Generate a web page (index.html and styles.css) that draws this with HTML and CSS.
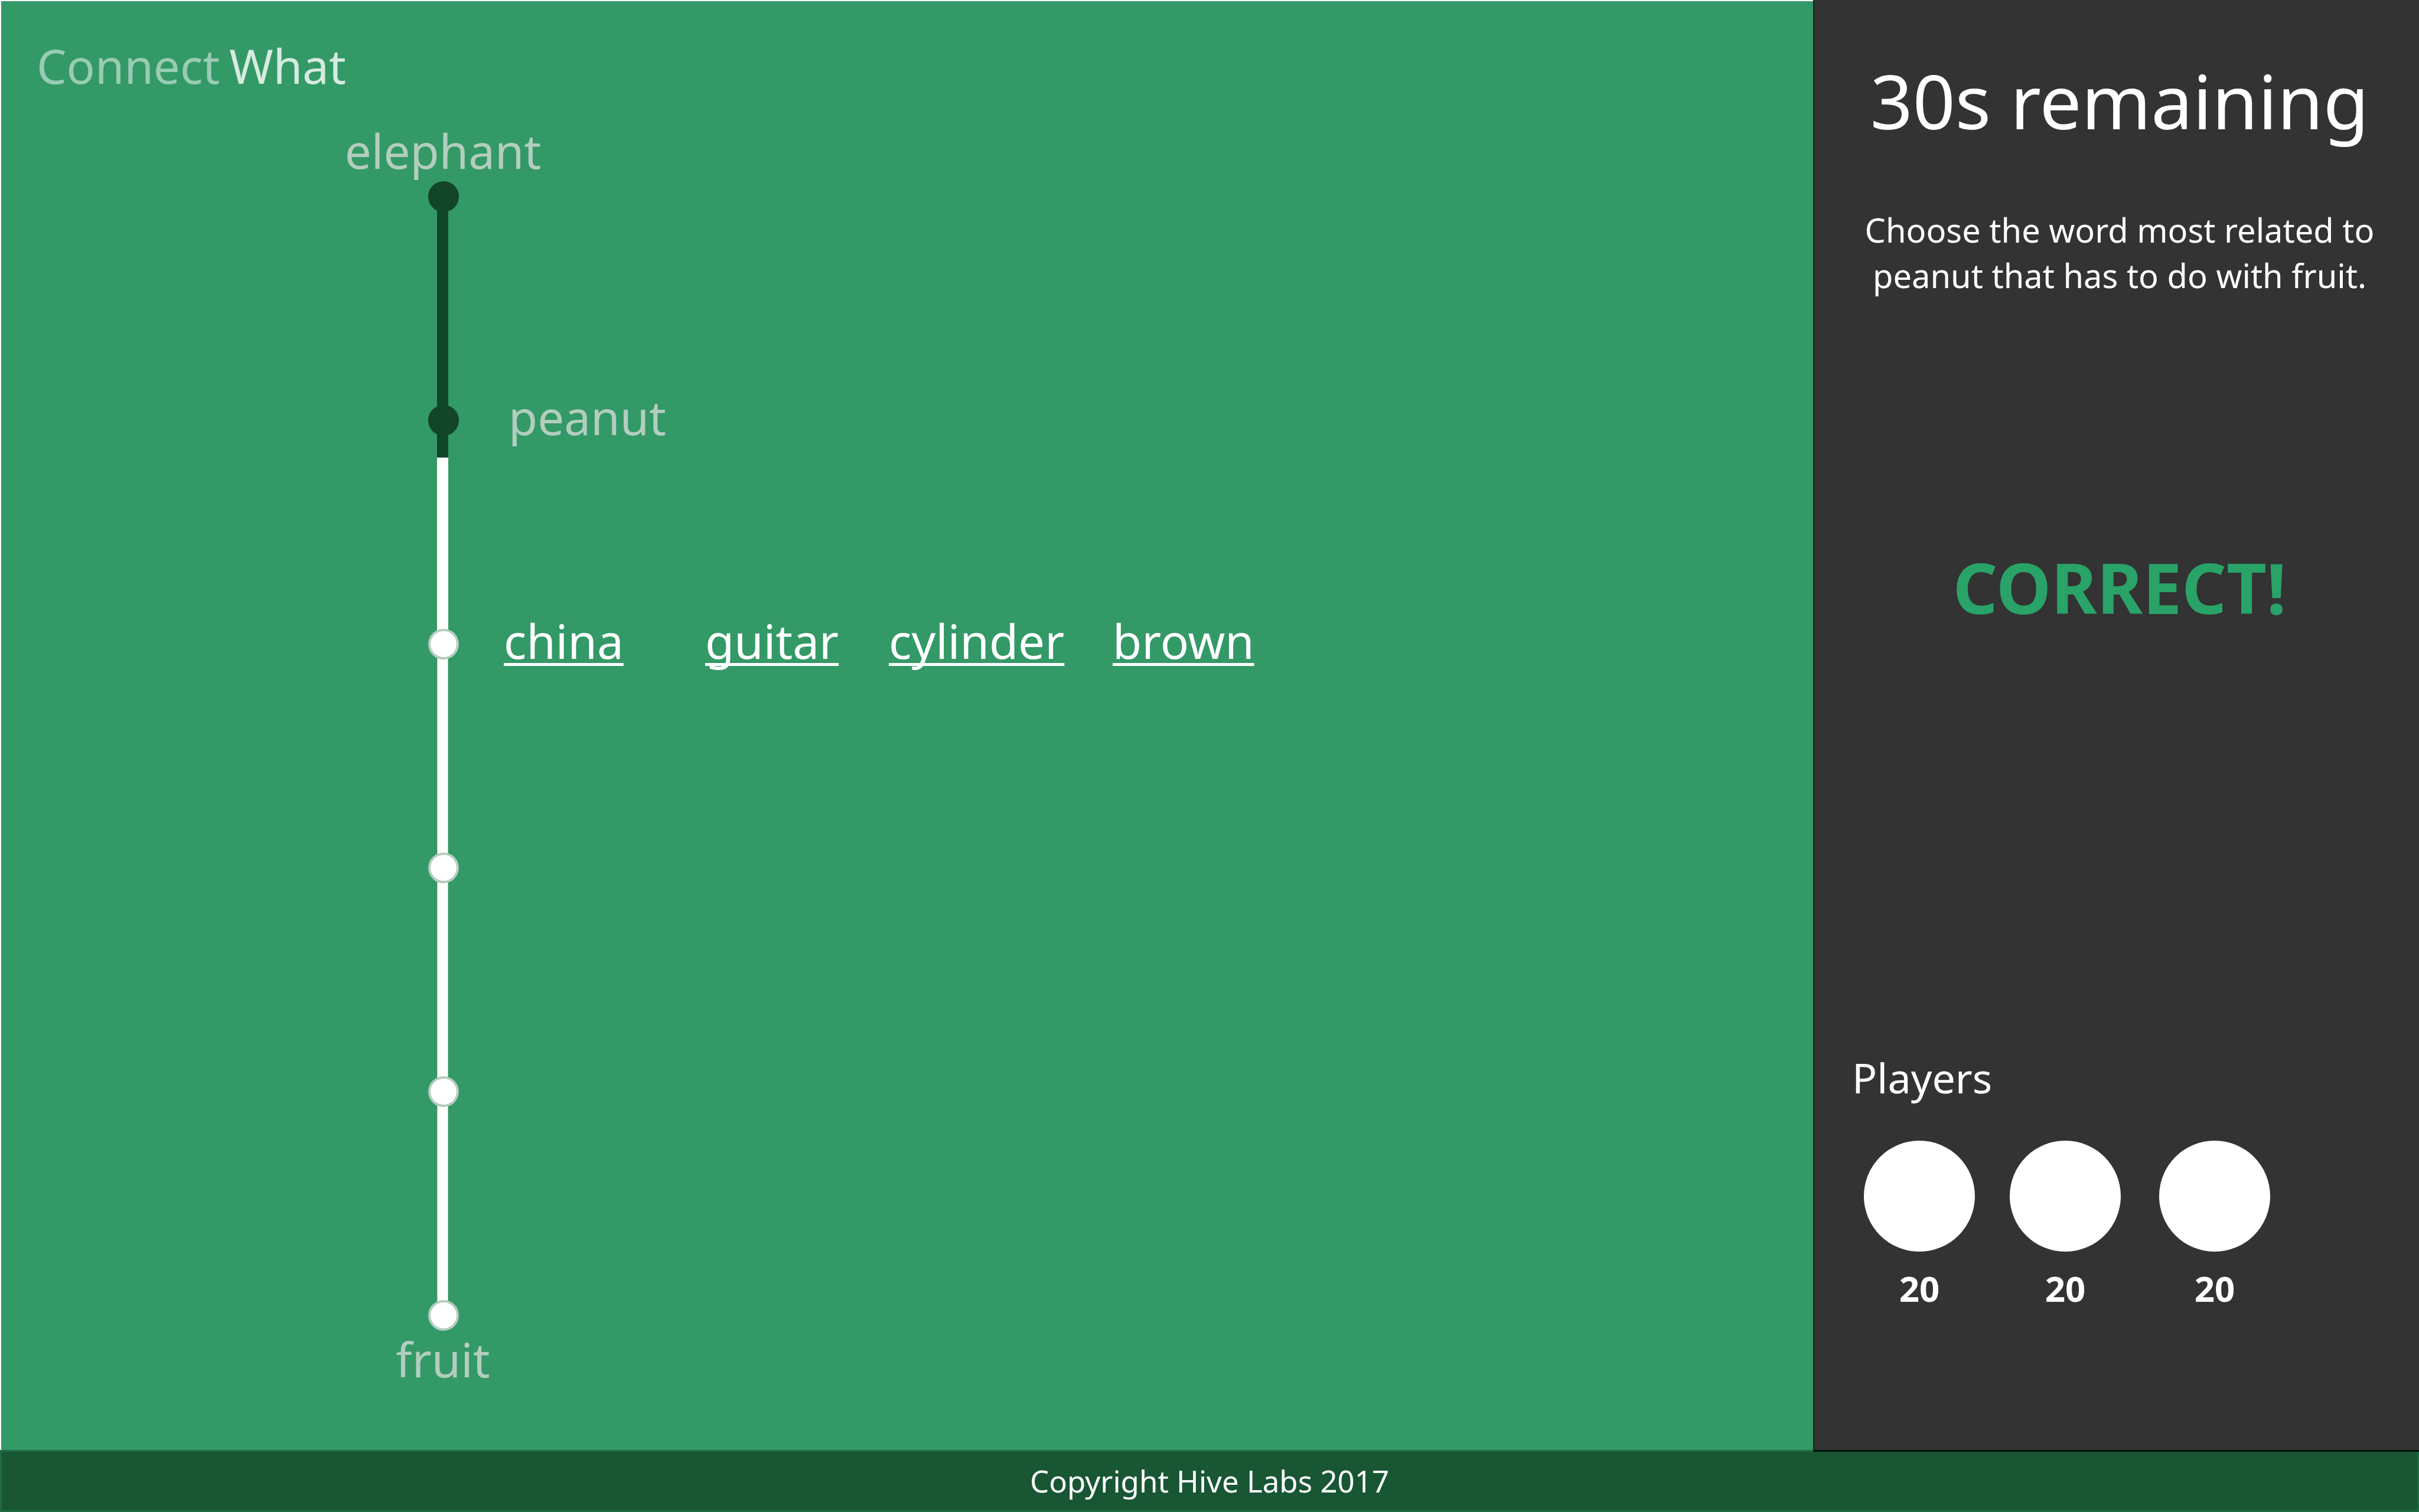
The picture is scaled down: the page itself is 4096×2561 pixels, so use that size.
FILE: index.html
```html
<!DOCTYPE html>
<html lang="en">
<head>
<meta charset="utf-8">
<meta name="viewport" content="width=device-width, initial-scale=1">
<title>ConnectWhat</title>
<link rel="stylesheet" href="styles.css">
</head>
<body>
<div class="page">
  <main class="board">
    <h1 class="logo"><span class="logo-first">Connect</span><span class="logo-second">What</span></h1>
    <section class="chain" aria-label="Word chain">
      <p class="chain-end chain-start">elephant</p>
      <ol class="steps">
        <li class="step">
          <div class="rail"><span class="dot dot-done"></span><span class="line line-done"></span></div>
        </li>
        <li class="step">
          <div class="rail"><span class="dot dot-done"></span><span class="line line-current"></span></div>
          <p class="picked">peanut</p>
        </li>
        <li class="step">
          <div class="rail"><span class="dot"></span><span class="line"></span></div>
          <nav class="choices" aria-label="Word choices">
            <a href="#china">china</a>
            <a href="#guitar">guitar</a>
            <a href="#cylinder">cylinder</a>
            <a href="#brown">brown</a>
          </nav>
        </li>
        <li class="step">
          <div class="rail"><span class="dot"></span><span class="line"></span></div>
        </li>
        <li class="step">
          <div class="rail"><span class="dot"></span><span class="line"></span></div>
        </li>
        <li class="step step-last">
          <div class="rail"><span class="dot"></span></div>
        </li>
      </ol>
      <p class="chain-end">fruit</p>
    </section>
  </main>

  <aside class="sidebar">
    <p class="timer">30s remaining</p>
    <p class="hint">Choose the word most related to peanut that has to do with fruit.</p>
    <p class="result">CORRECT!</p>
    <section class="players">
      <h2 class="players-title">Players</h2>
      <ul class="players-list">
        <li class="player"><span class="avatar"></span><span class="score">20</span></li>
        <li class="player"><span class="avatar"></span><span class="score">20</span></li>
        <li class="player"><span class="avatar"></span><span class="score">20</span></li>
      </ul>
    </section>
  </aside>

  <footer class="footer">Copyright Hive Labs 2017</footer>
</div>
</body>
</html>
```
FILE: styles.css
```css
* {
  box-sizing: border-box;
}

body,
h1,
h2,
p,
ol,
ul {
  margin: 0;
  padding: 0;
}

ol,
ul {
  list-style: none;
}

body {
  font-family: "Noto Sans", "Open Sans", sans-serif;
  color: #fff;
  background: #396;
}

.page {
  display: grid;
  grid-template-columns: minmax(0, 1fr) 1026px;
  grid-template-rows: 1fr auto;
  min-height: 100vh;
}

/* Board */

.board {
  padding-top: 61px;
  border-top: 2px solid #fff;
  border-left: 2px solid #fff;
  background: #396;
  font-size: 80px;
  line-height: 96px;
}

.logo {
  display: flex;
  gap: 16px;
  padding-left: 60px;
  font-size: 80px;
  font-weight: 400;
}

.logo-first {
  color: #99ccb3;
}

.logo-second {
  color: #d6ebe0;
}

.chain {
  padding: 48px 0 96px 548px;
}

.chain-end {
  width: 400px;
  text-align: center;
  color: #b3cdbf;
}

.chain-start {
  margin-bottom: 4px;
}

.steps {
  padding-left: 175px;
}

.step {
  display: flex;
  gap: 76px;
  height: 379px;
}

.step-last {
  height: 52px;
}

.rail {
  display: flex;
  flex-direction: column;
  width: 52px;
}

.dot {
  flex: none;
  width: 52px;
  height: 52px;
  border: 4px solid #b3cdbf;
  border-radius: 50%;
  background: #fff;
  z-index: 1;
}

.dot-done {
  border-color: #114628;
  background: #114628;
}

.line {
  flex: 1;
  width: 19px;
  margin: -4px 0 -4px 15px;
  border: solid #b3cdbf;
  border-width: 0 1px;
  background: #fff;
}

.line-done {
  border-color: #114628;
  background: #114628;
}

.line-current {
  border: 0;
  background: linear-gradient(#114628 41px, #fff 41px);
}

.picked {
  padding-left: 8px;
  line-height: 40px;
  color: #b3cdbf;
}

.choices {
  display: grid;
  grid-template-columns: 341px 311px 379px auto;
  line-height: 40px;
}

.choices a {
  color: #fff;
  text-decoration-thickness: 5px;
  text-underline-offset: 7px;
  text-decoration-skip-ink: none;
}

/* Sidebar */

.sidebar {
  display: flex;
  flex-direction: column;
  margin-bottom: -3px;
  padding: 95px 54px 238px 64px;
  border-left: 2px solid #10281c;
  border-bottom: 3px solid #04140c;
  background: #333;
  text-align: center;
  z-index: 1;
}

.timer {
  font-size: 126px;
  line-height: 150px;
}

.hint {
  margin-top: 106px;
  font-size: 56px;
  line-height: 77px;
}

.result {
  margin-top: 420px;
  font-size: 118px;
  font-weight: 700;
  line-height: 140px;
  color: #29a368;
}

.players {
  margin-top: auto;
}

.players-title {
  font-size: 70px;
  font-weight: 400;
  line-height: 84px;
  text-align: left;
}

.players-list {
  display: grid;
  grid-template-columns: 247px 253px auto;
  padding: 65px 0 0 20px;
}

.player {
  display: flex;
  flex-direction: column;
  gap: 26px;
  width: 188px;
}

.avatar {
  height: 188px;
  border-radius: 50%;
  background: #fff;
}

.score {
  font-size: 60px;
  font-weight: 700;
  line-height: 72px;
}

/* Footer */

.footer {
  grid-column: 1 / -1;
  padding: 14px 0 15px;
  border: 3px solid #1f6b43;
  background: #185634;
  font-size: 51px;
  line-height: 70px;
  text-align: center;
}
```
